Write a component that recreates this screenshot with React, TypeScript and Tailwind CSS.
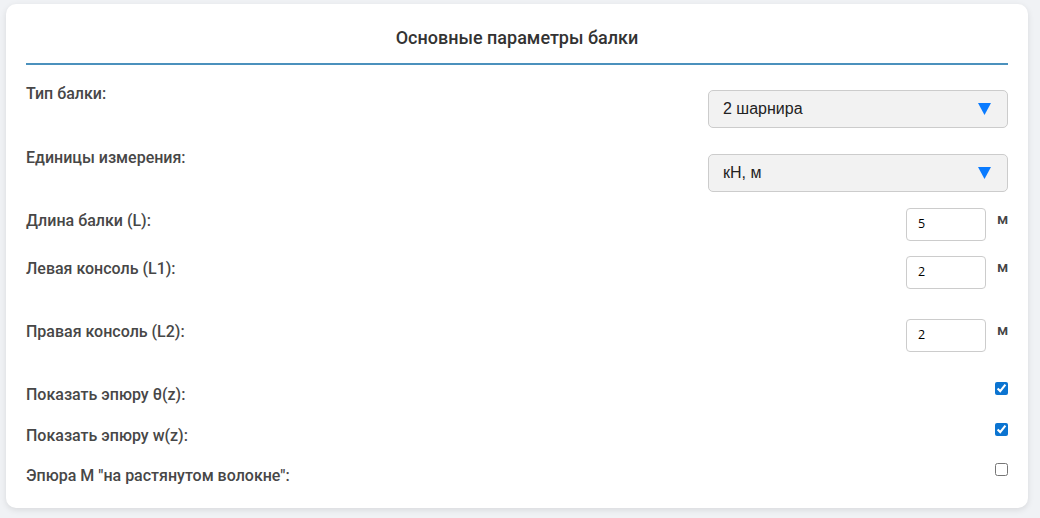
import React from "react";

const labelCls =
  "text-[16px] leading-[22px] font-medium text-[#474747] font-['Roboto',sans-serif]";

function Select({ value }: { value: string }) {
  return (
    <div className="mt-[7px] w-[300px] h-[38px] rounded-[5px] border border-[#cccccc] bg-[#f2f2f2] flex items-center justify-between pl-[14px] pr-[16px]">
      <span className="text-[16px] text-[#222] font-['Liberation_Sans',Arial,sans-serif]">
        {value}
      </span>
      <svg width="13" height="12" viewBox="0 0 13 12">
        <polygon points="0,0 13,0 6.5,12" fill="#0a7bff" />
      </svg>
    </div>
  );
}

function NumRow({ label, value, mt }: { label: string; value: string; mt: string }) {
  return (
    <div className={`flex items-start justify-between ${mt}`}>
      <div className={`${labelCls} mt-[2px]`}>{label}</div>
      <div className="flex items-start">
        <div className="w-[80px] h-[33px] rounded-[4px] border border-[#cccccc] bg-white flex items-center pl-[11px] text-[12.5px] text-black font-['Open_Sans',sans-serif]">
          {value}
        </div>
        <span className="ml-[11px] mt-[1px] w-[11px] text-[15px] leading-[20px] font-medium text-[#444] font-['Roboto',sans-serif]">
          м
        </span>
      </div>
    </div>
  );
}

function CheckRow({
  label,
  checked,
  mt,
  cbMt,
  lblMt,
}: {
  label: string;
  checked: boolean;
  mt: string;
  cbMt: string;
  lblMt: string;
}) {
  return (
    <div className={`flex items-start justify-between ${mt}`}>
      <div className={`${labelCls} ${lblMt}`}>{label}</div>
      <input
        type="checkbox"
        defaultChecked={checked}
        className={`w-[13px] h-[13px] accent-[#0b74d1] ${cbMt}`}
      />
    </div>
  );
}

export default function App() {
  return (
    <div className="min-h-[518px] w-full bg-[#f0f2f5] pt-[4px] pl-[6px]">
      <div className="w-[1022px] h-[504px] bg-white rounded-[10px] shadow-[0_2px_6px_rgba(0,0,0,0.1)] px-[20px]">
        <div className="pt-[22px] pb-[13px] border-b-2 border-[#4b91bd] text-center text-[18px] leading-[24px] font-medium text-[#333] font-['Roboto',sans-serif]">
          Основные параметры балки
        </div>

        <div className="flex items-start justify-between mt-[18px]">
          <div className={labelCls}>Тип балки:</div>
          <Select value="2 шарнира" />
        </div>

        <div className="flex items-start justify-between mt-[19px]">
          <div className={labelCls}>Единицы измерения:</div>
          <Select value="кН, м" />
        </div>

        <NumRow label="Длина балки (L):" value="5" mt="mt-[16px]" />
        <NumRow label="Левая консоль (L1):" value="2" mt="mt-[15px]" />
        <NumRow label="Правая консоль (L2):" value="2" mt="mt-[30px]" />

        <div className="flex flex-col">
          <CheckRow
            label="Показать эпюру θ(z):"
            checked
            mt="mt-[30px]"
            cbMt="mt-0"
            lblMt="mt-[2px]"
          />
          <CheckRow
            label="Показать эпюру w(z):"
            checked
            mt="mt-[16px]"
            cbMt="mt-[1px]"
            lblMt="mt-[3px]"
          />
          <CheckRow
            label={'Эпюра M "на растянутом волокне":'}
            checked={false}
            mt="mt-[13px]"
            cbMt="mt-[3px]"
            lblMt="mt-[5px]"
          />
        </div>
      </div>
    </div>
  );
}
